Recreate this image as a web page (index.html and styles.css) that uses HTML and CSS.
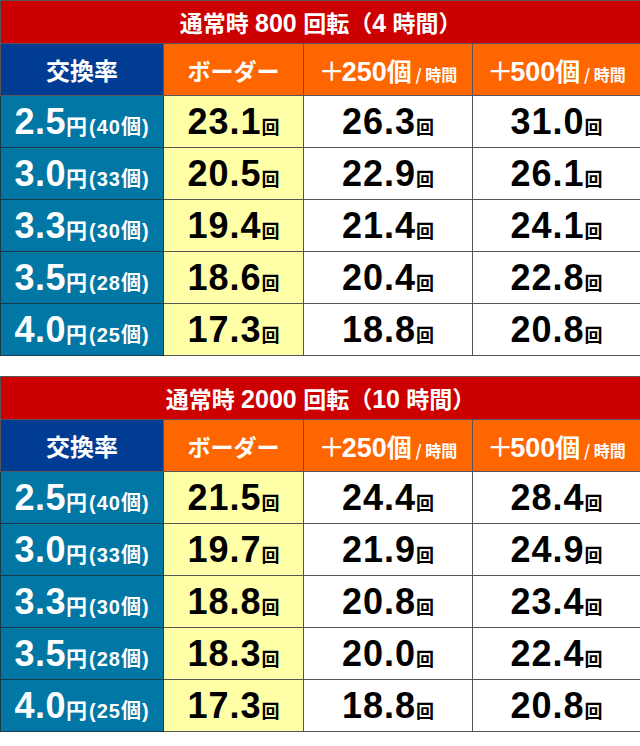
FILE: index.html
```html
<!DOCTYPE html>
<html lang="ja">
<head>
<meta charset="utf-8">
<link rel="stylesheet" href="styles.css">
</head>
<body>
<table class="bt">
  <colgroup><col class="c1"><col class="c2"><col class="c3"><col class="c4"></colgroup>
  <tr><th class="title" colspan="4"><span class="tt">通常時</span> <span class="td">800</span> <span class="tt">回転（</span><span class="td">4</span> <span class="tt">時間）</span></th></tr>
  <tr class="hd">
    <th class="h-rate">交換率</th>
    <th class="h-or">ボーダー</th>
    <th class="h-or"><span class="pl">＋</span><span class="plus">250</span><span class="ko">個</span><span class="per"> / 時間</span></th>
    <th class="h-or"><span class="pl">＋</span><span class="plus">500</span><span class="ko">個</span><span class="per"> / 時間</span></th>
  </tr>
  <tr><td class="rate"><span class="big">2.5</span><span class="unit"><span class="yen">円</span>(40個)</span></td><td class="bd"><span class="num">23.1</span><span class="kai">回</span></td><td><span class="num">26.3</span><span class="kai">回</span></td><td><span class="num">31.0</span><span class="kai">回</span></td></tr>
  <tr><td class="rate"><span class="big">3.0</span><span class="unit"><span class="yen">円</span>(33個)</span></td><td class="bd"><span class="num">20.5</span><span class="kai">回</span></td><td><span class="num">22.9</span><span class="kai">回</span></td><td><span class="num">26.1</span><span class="kai">回</span></td></tr>
  <tr><td class="rate"><span class="big">3.3</span><span class="unit"><span class="yen">円</span>(30個)</span></td><td class="bd"><span class="num">19.4</span><span class="kai">回</span></td><td><span class="num">21.4</span><span class="kai">回</span></td><td><span class="num">24.1</span><span class="kai">回</span></td></tr>
  <tr><td class="rate"><span class="big">3.5</span><span class="unit"><span class="yen">円</span>(28個)</span></td><td class="bd"><span class="num">18.6</span><span class="kai">回</span></td><td><span class="num">20.4</span><span class="kai">回</span></td><td><span class="num">22.8</span><span class="kai">回</span></td></tr>
  <tr><td class="rate"><span class="big">4.0</span><span class="unit"><span class="yen">円</span>(25個)</span></td><td class="bd"><span class="num">17.3</span><span class="kai">回</span></td><td><span class="num">18.8</span><span class="kai">回</span></td><td><span class="num">20.8</span><span class="kai">回</span></td></tr>
</table>
<table class="bt second">
  <colgroup><col class="c1"><col class="c2"><col class="c3"><col class="c4"></colgroup>
  <tr><th class="title" colspan="4"><span class="tt">通常時</span> <span class="td">2000</span> <span class="tt">回転（</span><span class="td">10</span> <span class="tt">時間）</span></th></tr>
  <tr class="hd">
    <th class="h-rate">交換率</th>
    <th class="h-or">ボーダー</th>
    <th class="h-or"><span class="pl">＋</span><span class="plus">250</span><span class="ko">個</span><span class="per"> / 時間</span></th>
    <th class="h-or"><span class="pl">＋</span><span class="plus">500</span><span class="ko">個</span><span class="per"> / 時間</span></th>
  </tr>
  <tr><td class="rate"><span class="big">2.5</span><span class="unit"><span class="yen">円</span>(40個)</span></td><td class="bd"><span class="num">21.5</span><span class="kai">回</span></td><td><span class="num">24.4</span><span class="kai">回</span></td><td><span class="num">28.4</span><span class="kai">回</span></td></tr>
  <tr><td class="rate"><span class="big">3.0</span><span class="unit"><span class="yen">円</span>(33個)</span></td><td class="bd"><span class="num">19.7</span><span class="kai">回</span></td><td><span class="num">21.9</span><span class="kai">回</span></td><td><span class="num">24.9</span><span class="kai">回</span></td></tr>
  <tr><td class="rate"><span class="big">3.3</span><span class="unit"><span class="yen">円</span>(30個)</span></td><td class="bd"><span class="num">18.8</span><span class="kai">回</span></td><td><span class="num">20.8</span><span class="kai">回</span></td><td><span class="num">23.4</span><span class="kai">回</span></td></tr>
  <tr><td class="rate"><span class="big">3.5</span><span class="unit"><span class="yen">円</span>(28個)</span></td><td class="bd"><span class="num">18.3</span><span class="kai">回</span></td><td><span class="num">20.0</span><span class="kai">回</span></td><td><span class="num">22.4</span><span class="kai">回</span></td></tr>
  <tr><td class="rate"><span class="big">4.0</span><span class="unit"><span class="yen">円</span>(25個)</span></td><td class="bd"><span class="num">17.3</span><span class="kai">回</span></td><td><span class="num">18.8</span><span class="kai">回</span></td><td><span class="num">20.8</span><span class="kai">回</span></td></tr>
</table>
</body>
</html>
```
FILE: styles.css
```css
html, body {
  margin: 0;
  padding: 0;
  background: #ffffff;
}
body {
  font-family: "Liberation Sans", "Noto Sans CJK JP", sans-serif;
  font-weight: bold;
}
.bt {
  width: 640px;
  border-collapse: collapse;
  table-layout: fixed;
  border: 1px solid #555;
}
.bt.second {
  margin-top: 20px;
}
.c1 { width: 163px; }
.c2 { width: 140px; }
.c3 { width: 169px; }
.c4 { width: 168px; }
.bt th, .bt td {
  border: 1px solid #555;
  padding: 0;
  text-align: center;
  vertical-align: middle;
  white-space: nowrap;
  font-weight: bold;
}
.title {
  background: #cc0000;
  color: #fff;
  height: 42px;
  font-size: 23px;
}
.tt {
  font-family: "Noto Sans CJK JP", sans-serif;
}
.td {
  font-family: "Liberation Sans", sans-serif;
  font-size: 25px;
}
.hd th {
  height: 51px;
  color: #fff;
}
.h-rate {
  background: #003b94;
  font-size: 24px;
  font-family: "Noto Sans CJK JP", sans-serif;
}
.h-or {
  background: #ff6600;
  font-size: 23px;
  font-family: "Noto Sans CJK JP", sans-serif;
}
.pl {
  font-family: "Noto Sans CJK JP", sans-serif;
  font-size: 26px;
  font-weight: 500;
  margin-right: -3px;
}
.plus {
  font-family: "Liberation Sans", sans-serif;
  font-size: 27px;
}
.ko {
  font-family: "Noto Sans CJK JP", sans-serif;
  font-size: 25px;
}
.per {
  font-size: 16px;
  font-family: "Noto Sans CJK JP", sans-serif;
}
.bt td {
  height: 51px;
  background: #fff;
  color: #000;
}
.bt td.rate {
  background: #0077a5;
  color: #fff;
  border-color: #1d3a48;
}
.bt td.bd {
  background: #ffffa8;
}
.big {
  font-size: 36px;
  font-family: "Liberation Sans", sans-serif;
  letter-spacing: 0.5px;
}
.unit {
  font-size: 20px;
  font-family: "Liberation Sans", "Noto Sans CJK JP", sans-serif;
  letter-spacing: 1px;
}
.yen {
  font-family: "Noto Sans CJK JP", sans-serif;
  font-size: 21px;
  margin-right: 1px;
}
.num {
  font-size: 36px;
  font-family: "Liberation Sans", sans-serif;
  letter-spacing: 1px;
}
.kai {
  font-size: 18px;
  font-family: "Noto Sans CJK JP", sans-serif;
}
```
